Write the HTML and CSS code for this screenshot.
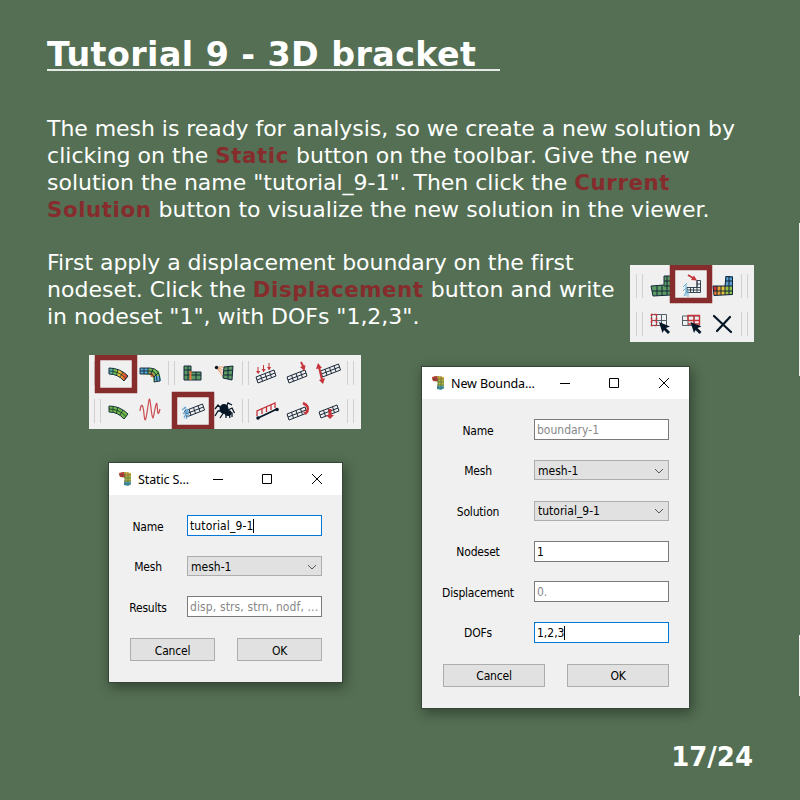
FILE: index.html
```html
<!DOCTYPE html>
<html lang="en">
<head>
<meta charset="utf-8">
<title>Tutorial 9 - 3D bracket</title>
<link rel="stylesheet" href="styles.css">
</head>
<body>
<svg class="defs" width="0" height="0">
  <defs>
    <g id="beam" fill="none" stroke="#1b2a3a" stroke-width="1"><path d="M0 7 18 0 20 6 2 13ZM1 10 19 3M4.500 5.200 6.500 11.200M9 3.500 11 9.500M13.500 1.700 15.500 7.700"/></g>
    <g id="arc"><path d="M1 1Q12 1 20 9L16 14Q10 7 1 7Z" stroke="#15303a"/><path d="M1 4Q11 4 18 11.500M5 1V7M10 2 8.500 8M15 5 12 10" fill="none" stroke="#15303a" stroke-width=".8"/></g>
    <g id="pointer"><path d="M0 0 11 4.500 7 6 11 10 9 12 5 8 3.500 11Z" fill="#051626"/></g>
    <g id="app">
      <path d="M0 1 7 0 12 2 12 12 9 14 5 12 6 6 1 5Z" fill="#a8b545"/>
      <path d="M0 1 5 0 6 5 1 5Z" fill="#c83a3a"/><path d="M5 0 12 1 12 4 6 4Z" fill="#d0ad3d"/><path d="M5 10H12V12L9 14 5 13Z" fill="#4ca1bd"/>
      <path d="M0 3H12M5 6H12M5 9H12M5 12H12M3 0V5M6 0V13M9 0V13" stroke="#34463c" stroke-width=".6" opacity=".75"/>
    </g>
    <linearGradient id="heat"><stop offset="0" stop-color="#58aaca"/><stop offset=".3" stop-color="#65bf58"/><stop offset=".55" stop-color="#e9c72d"/><stop offset=".75" stop-color="#ec6d2e"/><stop offset="1" stop-color="#cc3035"/></linearGradient>
  </defs>
</svg>
<main class="slide">
  <h1>Tutorial 9 - 3D bracket</h1>
  <p class="intro"><span class="tight">The mesh is ready for analysis, so we create a new solution by</span><br>clicking on the <b>Static</b> button on the toolbar. Give the new<br><span class="snug">solution the name "tutorial_9-1". Then click the </span><b>Current</b><br><b>Solution</b> button to visualize the new solution in the viewer.</p>
  <section class="step">
    <p><span class="tight">First apply a displacement boundary on the first</span><br>nodeset. Click the <b>Displacement</b> button and write<br><span class="snug">in nodeset "1", with DOFs "1,2,3".</span></p>
    <svg class="viewbar" width="124" height="77" viewBox="630 265 124 77">
      <path fill="#f0f0f0" d="M630 265h124v77H630z"/>
      <path stroke="#d0d0d0" d="M636.500 274v24M642.500 274v24M741.500 274v24M747.500 274v24M636.500 312v24M642.500 312v24M741.500 312v24M747.500 312v24"/>
      <path d="M651 286 664 285V276H671V295L653 296Z" fill="#5c9b63" stroke="#14273a"/>
      <path d="M652 291H671M664 286H671M664 281H671M657 285V296M662 285V296M667 276V295" stroke="#14273a" fill="none"/>
      <path d="M672.500 267.500h37v33h-37z" fill="#f0f0f0" stroke="#862c2d" stroke-width="5.500"/>
      <path d="M687 287.500H697V280.500H700.500V292.500H687ZM687 290H701M697 284H701M697 287.500H701M690.500 287V292M693.500 287V292M697 280V292" fill="none" stroke="#263542" stroke-width=".9"/>
      <path d="M688 275 693 278" stroke="#c63439" stroke-width="1.800"/><path d="m691 280 6 .5-3-5z" fill="#c63439"/>
      <path d="M687 283 683 287M687 287 683 291M687 290 684 296M686 284 686 296M688 290 688 297" stroke="#69b3d7"/>
      <path d="M713 286H725V276H733V295H714Z" fill="#9dbe45"/>
      <path d="M713 286h4v5h-4z" fill="#cf3435"/><path d="M714 291h4v4h-4z" fill="#eb7c32"/><path d="M717 286h4v9h-4z" fill="#e89d35"/><path d="M721 286h4v9h-4z" fill="#e7c43a"/><path d="M725 276h8v10h-8z" fill="#5a9fd0"/><path d="M729 286h4v9h-4z" fill="#8fbf4c"/>
      <path d="M713 286H725L726 276.500 732.500 277V294.500L714 295.500ZM713 291H733M725 286H733M725 281H733M717 286V295M721 286V295M725 286V295M729 276V295" fill="none" stroke="#102438"/>
      <path d="M651.500 314.500H666.500V325.500H651.500ZM651 320.500H667M656.500 315V326M661.500 315V326" fill="none" stroke="#52606a"/>
      <path d="M651.500 314v12M656.500 314v12M651 314.500h6M651 320.500h6M651 325.500h6" stroke="#c63439" stroke-width="1.600" stroke-dasharray="2 1.500"/>
      <use href="#pointer" x="659" y="322"/>
      <path d="M682.500 316H699.500V325.500H682.500ZM682 320.500H700M688 316V326M694 316V326" fill="none" stroke="#52606a"/>
      <path d="M688 320.500V315.500H699.500V324H688M688 320.500H699M694 316V324" fill="none" stroke="#c63439" stroke-width="1.400"/>
      <use href="#pointer" x="690.500" y="322"/>
      <path d="m714 316 17 16M730 317 717 331" stroke="#051626" stroke-width="2.200" stroke-linecap="round"/>
    </svg>
  </section>
  <div class="workspace">
    <div class="left">
      <svg class="toolbar" width="272" height="74" viewBox="89 355 272 74">
        <path fill="#f0f0f0" d="M89 355h272v74H89z"/>
        <path stroke="#d0d0d0" d="M94.500 361v24M168.500 361v24M174.500 361v24M242.500 361v24M248.500 361v24M347.500 361v24M353.500 361v24M94.500 399v24M100.500 399v24M242.500 399v24M248.500 399v24M347.500 399v24M353.500 399v24"/>
        <path d="M97.500 357.500h37v33h-37z" fill="#f0f0f0" stroke="#862c2d" stroke-width="5.500"/>
        <use href="#arc" x="108" y="367" fill="url(#heat)"/>
        <path d="M140 368H152L159 371 161 381 154 382 152 375 140 374Z" fill="#75bd50"/><path d="M140 368h8v6h-8z" fill="#58a9d3"/><path d="M155 376h5l1 5h-6z" fill="#58a9d3"/><path d="m149 372 5 2v3h-3z" fill="#dd7034"/>
        <path d="M140 368H150Q160 368 160 381L154 382Q156 374 149 374H140ZM140 371H150Q157 371 157 381M144 368V374M148 368V374M153 369 151 374M158 373 154 377" fill="none" stroke="#14273a" stroke-width=".9"/>
        <path d="M184 366h7v6h10v8h-17z" fill="#5c9b63" stroke="#14273a"/><path d="M184 370h7M184 375h17M188 366v14M196 372v8" stroke="#14273a"/><path d="M190.500 371v9" stroke="#e87539" stroke-width="2"/>
        <path d="m216 367 9 0M216 367l9 4M216 367l9 8M216 367l9 12" stroke="#eba06f"/><circle cx="216.500" cy="367.500" r="1.700" fill="#051626"/><path d="M224 367 233 366 232 380 223 378Z" fill="#5c9b63" stroke="#14273a"/><path d="m224 371 9-1M224 375h8M228 367v12" stroke="#14273a"/>
        <use href="#beam" x="256" y="370"/>
        <g stroke="#c63439" fill="#c63439"><path d="M258 367v6M263.500 365v7M269 363v7"/><path d="m256 371 2.200 3 2-3zM261.500 369l2.200 3 2-3zM267 367l2.200 3 2-3z" stroke="none"/></g>
        <use href="#beam" x="287" y="370"/><path d="m301 362 3 6" stroke="#c63439" stroke-width="2"/><path d="m300 367 4.500 4 1-6z" fill="#c63439"/>
        <use href="#beam" x="320.500" y="364"/><path d="m319 367 3 13" stroke="#c63439" stroke-width="2"/><path d="m316 369 2-6 4 5zM319 380l4 4 2-6z" fill="#c63439"/>
        <use href="#arc" x="108" y="405" fill="#72b847"/>
        <path d="M140 411C141 403 143 403 144 414S146 420 148 406 150 402 151.500 412 153 419 155 409 157 404 157.500 410 159 413 160 409" fill="none" stroke="#cc4a4e" stroke-width="1.200"/>
        <path d="M174.500 394.500h37v33h-37z" fill="#f0f0f0" stroke="#862c2d" stroke-width="5.500"/>
        <use href="#beam" x="184.500" y="404"/><path d="M186 407 182 410M188 409 183 414M189 413 186 419M184 407 187 411 184 418M188 409V417" fill="none" stroke="#69a9d3" stroke-width="1.200"/>
        <ellipse cx="224" cy="409" rx="4.500" ry="5" fill="#051626"/><ellipse cx="228" cy="413" rx="3.500" ry="3" fill="#051626"/><path d="M223 410l-5-5-3 4M223 411h-5l-3 5M224 412l-4 6M226 408l2-5 4 2M228 410l4-2 2.500 5M229 412l3 1v4M226 412l0 6M229 413l1 5" fill="none" stroke="#051626" stroke-width="1.300"/>
        <path d="M258 418 277 409" stroke="#051626" stroke-width="1.800"/><circle cx="258" cy="418" r="1.800" fill="#051626"/><circle cx="277" cy="409.500" r="1.800" fill="#051626"/><path d="M257 416V411L275 403V408M262 414V409M266.500 412V407M271 410V405" fill="none" stroke="#c63439" stroke-width="1.300"/>
        <use href="#beam" x="287" y="407"/><path d="M303 403Q310 406 307 412" fill="none" stroke="#c63439" stroke-width="2.500"/><path d="m303 412 6-1-3 4z" fill="#c63439"/>
        <use href="#beam" x="319" y="405"/><path d="M330 409v8" stroke="#c63439" stroke-width="3"/><path d="m326 415 4 4 4-4z" fill="#c63439"/>
      </svg>
      <div class="dialog static">
        <header><svg width="14" height="15"><use href="#app"/></svg><span>Static S...</span><svg class="controls" width="110" height="12" viewBox="0 0 110 12"><path d="M0 6.500h10M49.500 1.500h9v9h-9zM99 1l10 10M109 1 99 11" fill="none" stroke="#000"/></svg></header>
        <div class="fields">
          <label>Name</label><div class="input focus">tutorial_9-1<i></i></div>
          <label>Mesh</label><div class="select">mesh-1<svg width="10" height="6"><path d="m1 1 4 4 4-4" fill="none" stroke="#555"/></svg></div>
          <label>Results</label><div class="input hint">disp, strs, strn, nodf, ...</div>
        </div>
        <footer><button>Cancel</button><button>OK</button></footer>
      </div>
    </div>
    <div class="dialog boundary">
      <header><svg width="14" height="15"><use href="#app"/></svg><span>New Bounda...</span><svg class="controls" width="110" height="12" viewBox="0 0 110 12"><path d="M0 6.500h10M49.500 1.500h9v9h-9zM99 1l10 10M109 1 99 11" fill="none" stroke="#000"/></svg></header>
      <div class="fields">
        <label>Name</label><div class="input hint">boundary-1</div>
        <label>Mesh</label><div class="select">mesh-1<svg width="10" height="6"><path d="m1 1 4 4 4-4" fill="none" stroke="#555"/></svg></div>
        <label>Solution</label><div class="select">tutorial_9-1<svg width="10" height="6"><path d="m1 1 4 4 4-4" fill="none" stroke="#555"/></svg></div>
        <label>Nodeset</label><div class="input">1</div>
        <label>Displacement</label><div class="input hint">0.</div>
        <label>DOFs</label><div class="input focus">1,2,3<i></i></div>
      </div>
      <footer><button>Cancel</button><button>OK</button></footer>
    </div>
  </div>
  <div class="page">17/24</div>
  <span class="edge upper"></span><span class="edge lower"></span>
</main>
</body>
</html>
```
FILE: styles.css
```css
* { box-sizing: border-box; }
body { margin: 0; }
.defs { position: absolute; }
.slide { position: relative; width: 800px; height: 800px; padding: 35px 46px 0 47px; overflow: hidden; background: #546f53; color: #fff; font-family: "DejaVu Sans", sans-serif; }
h1 { width: 453px; height: 36px; margin: 0; border-bottom: 2px solid #e6eae6; font-size: 33.3px; line-height: 39px; letter-spacing: .42px; white-space: nowrap; }
p { margin: 0; font-size: 22px; line-height: 27px; letter-spacing: .04px; white-space: nowrap; }
.tight { letter-spacing: -.05px; }
.snug { letter-spacing: -.02px; }
p b { color: #862c2d; font-size: 21.3px; line-height: 0; letter-spacing: .6px; }
.intro { margin-top: 44px; }
.step { display: flex; justify-content: space-between; height: 93px; margin-top: 26px; }
.step svg { margin-top: 16px; flex: none; }
.step p { width: 583px; }
.workspace { display: flex; align-items: flex-start; height: 355px; margin-top: 13px; }
.left { width: 332px; flex: none; padding-left: 42px; }
.toolbar { display: block; }
.dialog { background: #f0f0f0; border: 1px solid #364537; color: #000; box-shadow: 2px 4px 12px rgba(0,0,0,.4); font-family: "DejaVu Sans Condensed", "DejaVu Sans", sans-serif; font-stretch: condensed; font-size: 12px; letter-spacing: -.2px; }
.static { width: 235px; height: 221px; margin: 33px 0 0 19px; }
.boundary { width: 269px; height: 343px; margin: 11px 0 0 42px; }
header { display: flex; align-items: center; height: 32px; padding: 0 19px 0 10px; background: #fff; font-family: "Noto Sans", sans-serif; font-stretch: normal; font-size: 12.5px; letter-spacing: -.12px; }
header span { margin: 0 0 0 5px; }
header .controls { margin-left: auto; margin-top: -1px; }
.fields { display: grid; grid-template-columns: 78px 135px; grid-auto-rows: 21px; row-gap: 19.5px; padding: 20px 0 0; align-items: center; }
.boundary .fields { grid-template-columns: 112px 135px; }
label { padding-top: 2px; text-align: center; }
.input, .select { display: flex; align-items: center; height: 21px; padding: 1px 3px 0 2px; border: 1px solid #7a7a7a; background: #fff; letter-spacing: 0; white-space: nowrap; overflow: hidden; }
.select { height: 20px; justify-content: space-between; padding-right: 4px; padding-left: 3px; border-color: #adadad; background: #e1e1e1; }
.static .input { letter-spacing: .12px; }
.focus { border-color: #0078d7; }
.hint { color: #888; }
.input i { width: 1px; height: 14px; background: #000; }
footer { display: flex; margin: 21px 0 0 21px; gap: 22px; }
button { width: 85px; height: 23px; padding: 2px 0 0; border: 1px solid #adadad; background: #e1e1e1; color: #000; font: inherit; letter-spacing: inherit; }
.boundary button { width: 102px; }
.page { margin-top: 31px; padding-right: 1px; text-align: right; font-size: 26px; font-weight: bold; line-height: 32px; }
.edge { position: absolute; right: 0; width: 1px; background: #f0f0f0; }
.upper { top: 223px; height: 153px; }
.lower { top: 635px; height: 61px; }
```
